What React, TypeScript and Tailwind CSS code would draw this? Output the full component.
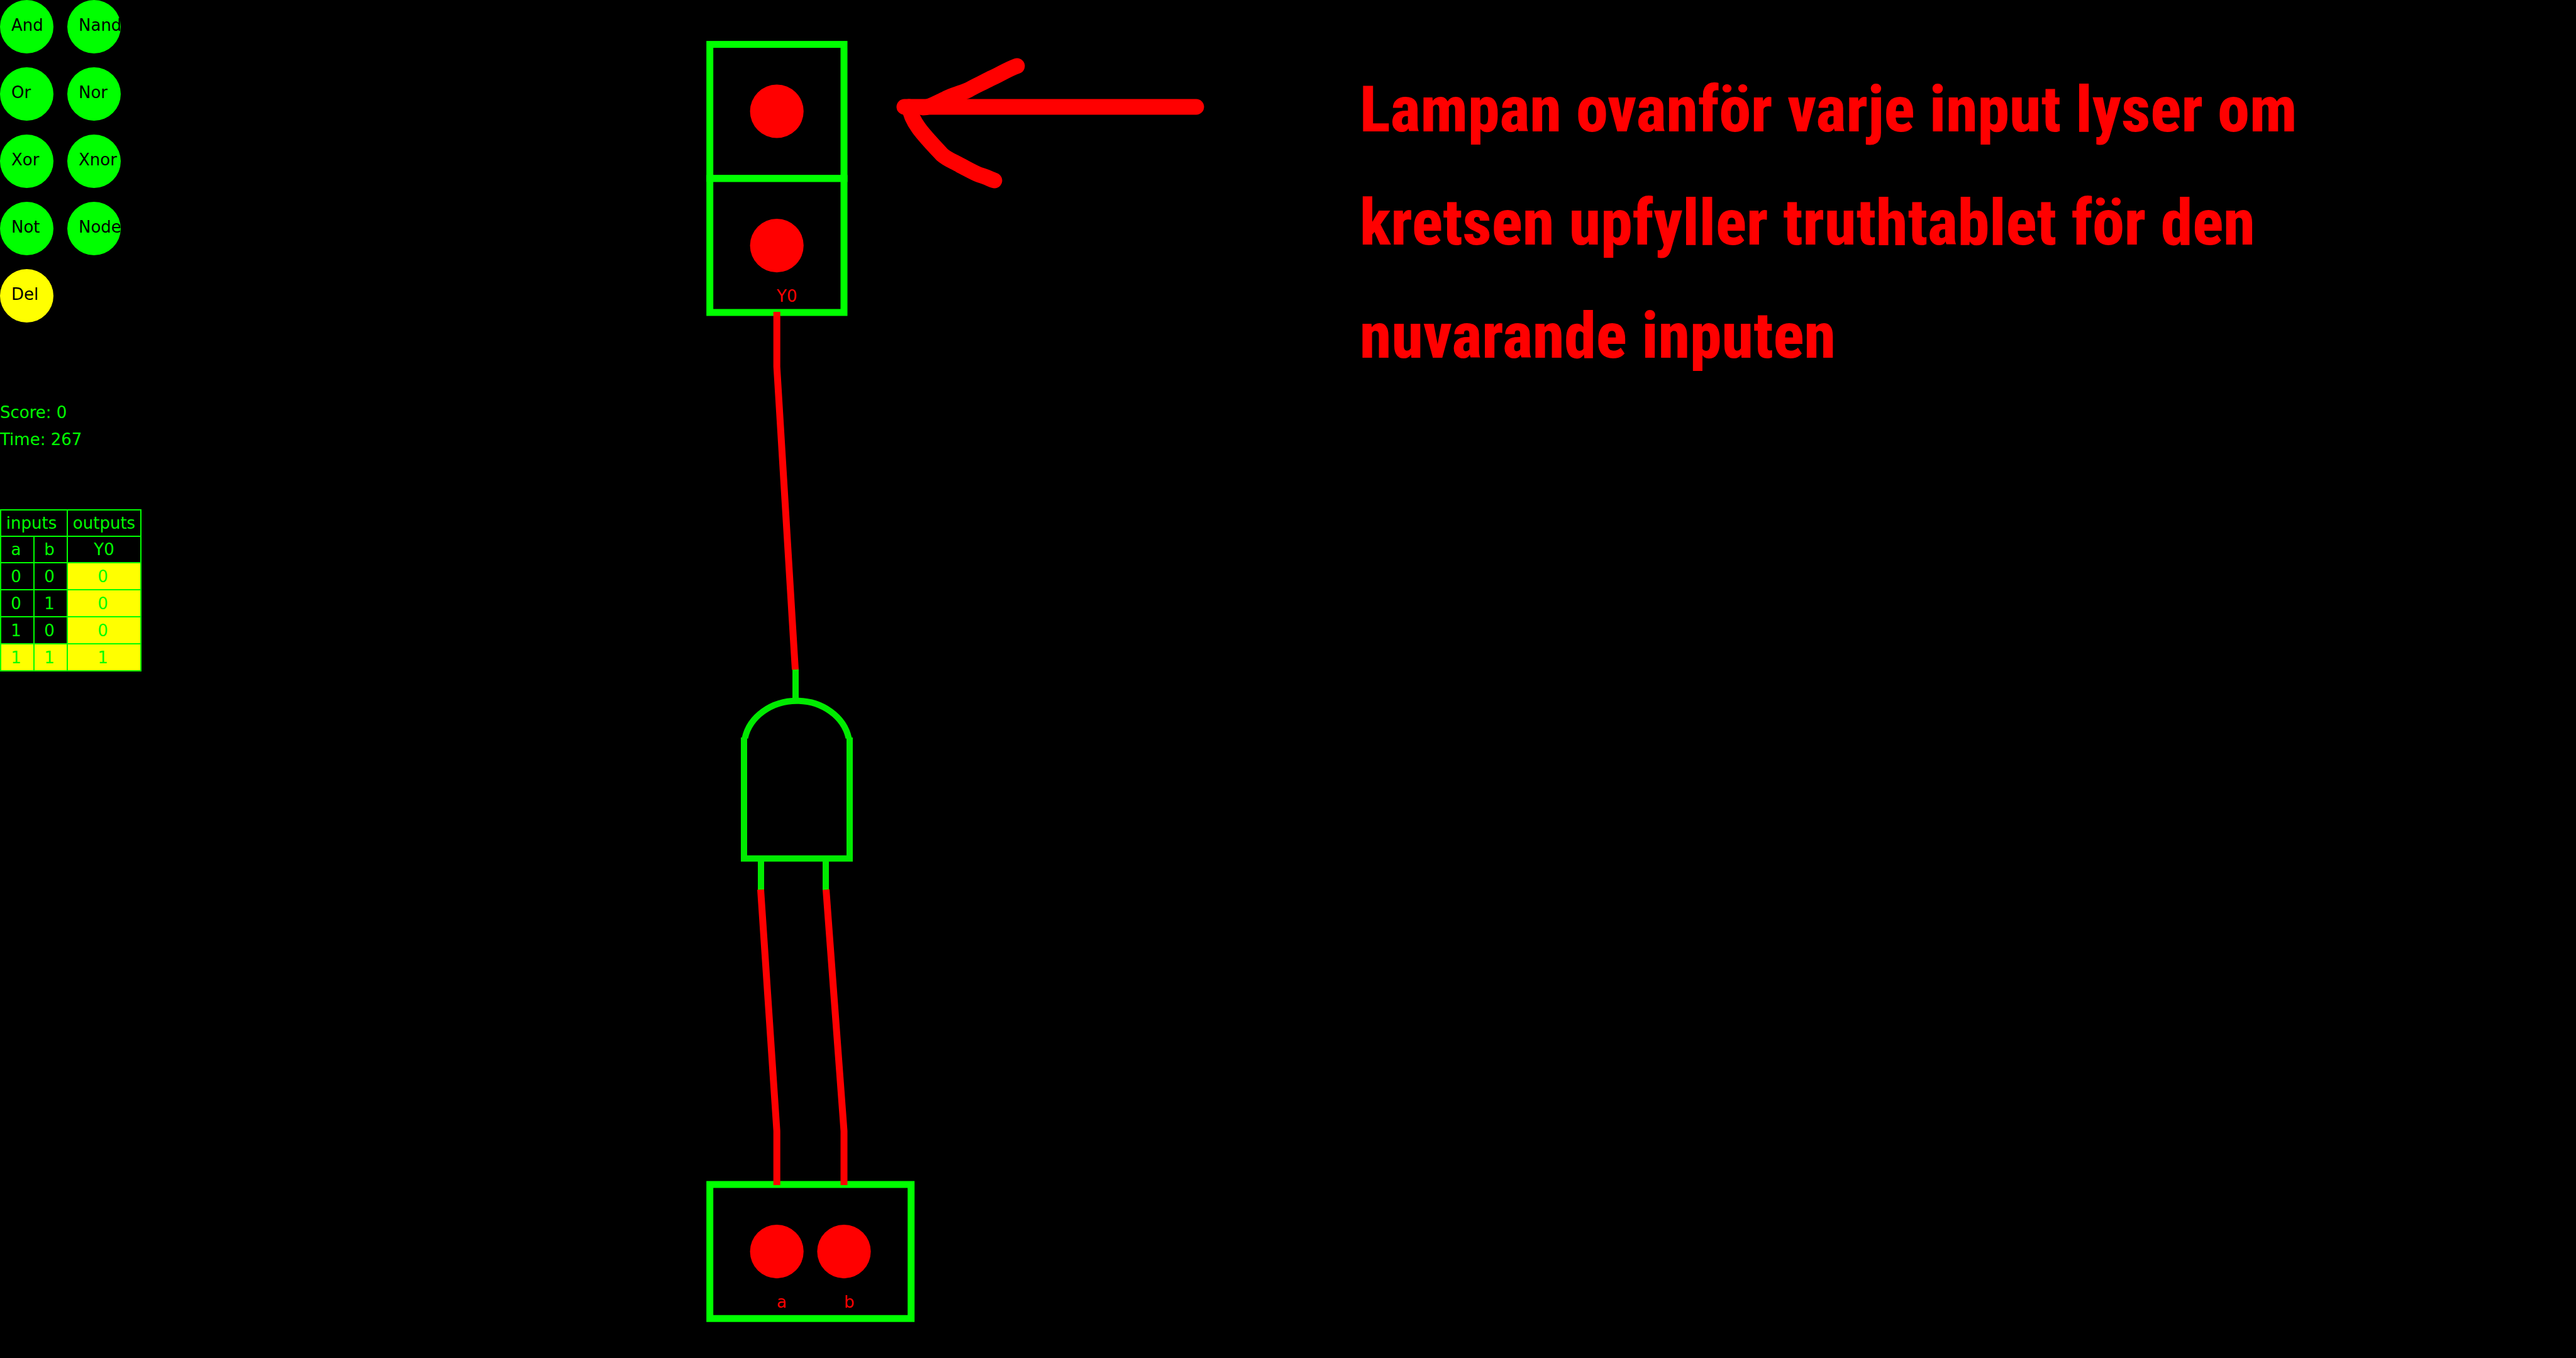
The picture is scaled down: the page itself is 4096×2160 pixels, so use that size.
type Gate = { name: string; tone: string };

const GATES: Gate[] = [
  { name: "And", tone: "bg-[#00ff00]" },
  { name: "Nand", tone: "bg-[#00ff00]" },
  { name: "Or", tone: "bg-[#00ff00]" },
  { name: "Nor", tone: "bg-[#00ff00]" },
  { name: "Xor", tone: "bg-[#00ff00]" },
  { name: "Xnor", tone: "bg-[#00ff00]" },
  { name: "Not", tone: "bg-[#00ff00]" },
  { name: "Node", tone: "bg-[#00ff00]" },
  { name: "Del", tone: "bg-[#ffff00]" },
];

const ROWS = [
  { inputs: [0, 0], output: 0, active: false },
  { inputs: [0, 1], output: 0, active: false },
  { inputs: [1, 0], output: 0, active: false },
  { inputs: [1, 1], output: 1, active: true },
];

const MESSAGE = [
  "Lampan ovanför varje input lyser om",
  "kretsen upfyller truthtablet för den",
  "nuvarande inputen",
];

function Toolbox() {
  return (
    <div className="grid w-[192px] grid-cols-2 gap-x-[22px] gap-y-[22px]">
      {GATES.map((gate) => (
        <button
          key={gate.name}
          type="button"
          className={`h-[85px] w-[85px] rounded-full pb-1 pl-[18px] text-left text-black ${gate.tone}`}
        >
          {gate.name}
        </button>
      ))}
    </div>
  );
}

function TruthTable() {
  const cell = "border-2 border-[#00ff00] p-0 text-center font-normal";
  return (
    <table className="mt-[89px] w-[225px] table-fixed border-collapse leading-none">
      <colgroup>
        <col className="w-[53px]" />
        <col className="w-[53px]" />
        <col />
      </colgroup>
      <thead>
        <tr className="h-[42px]">
          <th colSpan={2} className={`${cell} pr-2`}>inputs</th>
          <th className={cell}>outputs</th>
        </tr>
        <tr className="h-[42px]">
          <th className={`${cell} pr-1`}>a</th>
          <th className={`${cell} pr-1`}>b</th>
          <th className={cell}>Y0</th>
        </tr>
      </thead>
      <tbody>
        {ROWS.map((row) => (
          <tr key={row.inputs.join("")} className="h-[43px]">
            {row.inputs.map((value, i) => (
              <td key={i} className={`${cell} pr-1 ${row.active ? "bg-[#ffff00]" : "bg-black"}`}>
                {value}
              </td>
            ))}
            <td className={`${cell} bg-[#ffff00] pr-1`}>{row.output}</td>
          </tr>
        ))}
      </tbody>
    </table>
  );
}

function Circuit() {
  return (
    <svg
      viewBox="1120 0 800 2120"
      className="block h-[2120px] w-[800px]"
      role="img"
      aria-label="And gate circuit"
    >
      <g fill="none" stroke="#00ff00" strokeWidth="11">
        <rect x="1128.7" y="70.6" width="213.3" height="213.2" />
        <rect x="1128.7" y="283.8" width="213.3" height="213.2" />
        <rect x="1128.7" y="1884" width="320" height="213.2" />
      </g>
      <g fill="#ff0000">
        <circle cx="1235.2" cy="177" r="42.6" />
        <circle cx="1235.2" cy="390.6" r="42.6" />
        <circle cx="1235.2" cy="1990.6" r="42.6" />
        <circle cx="1342" cy="1990.6" r="42.6" />
      </g>
      <g fill="none" stroke="#00eb00" strokeWidth="10">
        <path d="M1265 1064V1114M1210 1366V1416M1313 1366V1416" />
        <path d="M1183 1173V1365.500H1351V1173" />
        <path d="M1184.500 1174A84 73 0 0 1 1349.500 1174" />
      </g>
      <g fill="none" stroke="#ff0000" strokeWidth="11">
        <path d="M1235.200 496V583L1264.500 1065" />
        <path d="M1209.500 1415L1235.200 1799V1885" />
        <path d="M1313.500 1415L1342 1799V1885" />
      </g>
      <g fill="#ff0000" fontSize="26">
        <text x="1235" y="480">Y0</text>
        <text x="1235" y="2080">a</text>
        <text x="1342" y="2080">b</text>
      </g>
      {/* Hand-drawn arrow pointing at the upper lamp */}
      <g fill="none" stroke="#ff0000" strokeWidth="25" strokeLinecap="round" strokeLinejoin="round">
        <path d="M1438 170H1902" />
        <path d="M1617 105C1600 111 1588 120 1575 125C1562 132 1552 136 1540 143C1524 150 1514 151 1502 158C1488 164 1478 171 1468 171" />
        <path d="M1446 170C1449 195 1470 216 1498 246C1507 254 1517 257 1527 263C1537 268 1547 274 1557 278C1568 281 1575 285 1581 287" />
      </g>
    </svg>
  );
}

export default function App() {
  return (
    <div className="grid min-h-screen grid-cols-[1120px_1042px_1fr] items-start overflow-hidden bg-black font-['DejaVu_Sans',sans-serif] text-[26px] leading-[43px] text-[#00ff00]">
      <aside>
        <Toolbox />
        <div className="mt-[122px]">
          <p>Score: 0</p>
          <p>Time: 267</p>
        </div>
        <TruthTable />
      </aside>
      <Circuit />
      <p className="pt-[84px] font-['Roboto_Condensed',Roboto,sans-serif] text-[102px] leading-[180px] font-extrabold text-[#ff0000]">
        {MESSAGE.map((line) => (
          <span key={line} className="block whitespace-nowrap">
            {line}
          </span>
        ))}
      </p>
    </div>
  );
}
